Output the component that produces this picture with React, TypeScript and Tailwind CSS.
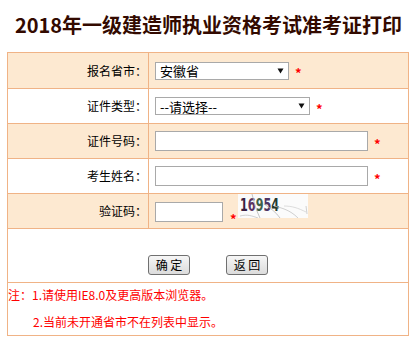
const LINE = "border-[#f0b386]";

function Star({ className = "" }: { className?: string }) {
  return (
    <span className={`text-[#ff0000] text-[13px] font-bold leading-[13px] ${className}`}>
      *
    </span>
  );
}

function FakeSelect({ text, width }: { text: string; width: string }) {
  return (
    <div
      className={`flex items-center justify-between h-[18px] ${width} bg-white border border-[#a9a9a9] pl-[4px] pr-[4px] text-[13px] leading-none text-black`}
    >
      <span>{text}</span>
      <svg width="7" height="6" viewBox="0 0 7 6">
        <path d="M0.5 0.5H6.5L3.5 5.5Z" fill="#111" />
      </svg>
    </div>
  );
}

function TextBox({ width }: { width: string }) {
  return (
    <input
      readOnly
      className={`block h-[20px] ${width} bg-white border border-[#a9a9a9] outline-none`}
    />
  );
}

function FormRow({
  label,
  shaded,
  height,
  align = "items-center",
  children,
}: {
  label: string;
  shaded: boolean;
  height: string;
  align?: string;
  children?: React.ReactNode;
}) {
  return (
    <div
      className={`grid grid-cols-[141px_1fr] ${height} border-b ${LINE} ${shaded ? "bg-[#fde9d1]" : "bg-white"}`}
    >
      <div className={`flex items-center justify-end pr-[1px] border-r ${LINE} text-[12px] text-black`}>
        {label}
      </div>
      <div className={`flex ${align} pl-[6px]`}>{children}</div>
    </div>
  );
}

// captcha picture: squeezed digits with grey noise lines
function Captcha() {
  return (
    <div className="relative w-[70px] h-[24px] bg-[#fbfbfb] overflow-hidden">
      <span className="absolute left-[2px] top-[3px] origin-left scale-x-[0.66] whitespace-nowrap text-[17px] leading-[17px] font-bold font-['DejaVu_Sans',sans-serif]">
        <span className="text-[#3a1f42]">1</span>
        <span className="text-[#5a3462]">6</span>
        <span className="text-[#3f6049]">9</span>
        <span className="text-[#4e3563]">5</span>
        <span className="text-[#23392f]">4</span>
      </span>
      <svg width="70" height="24" viewBox="0 0 70 24" className="absolute inset-0">
        <path d="M14 0 C16 8 18 16 22 24" stroke="#b8b8b8" strokeWidth="0.8" fill="none" />
        <path d="M26 10 C32 14 38 18 42 24" stroke="#b8b8b8" strokeWidth="0.8" fill="none" />
        <path d="M36 12 C44 14 52 16 60 24" stroke="#c4c4c4" strokeWidth="0.8" fill="none" />
        <path d="M2 22 C10 20 14 22 20 24" stroke="#c4c4c4" strokeWidth="0.8" fill="none" />
        <path d="M46 12 C54 12 60 14 68 18" stroke="#cfcfcf" strokeWidth="0.7" fill="none" />
        <path d="M68 12 L69 20" stroke="#bdbdbd" strokeWidth="0.7" fill="none" />
      </svg>
    </div>
  );
}

function Button({ text }: { text: string }) {
  return (
    <button className="flex items-center justify-center w-[42px] h-[20px] rounded-[3px] border border-[#707070] bg-gradient-to-b from-[#f6f6f6] to-[#dcdcdc] text-[12px] leading-none text-black whitespace-pre">
      {text}
    </button>
  );
}

export default function App() {
  return (
    <div className="w-[417px] h-[343px] bg-white font-['Noto_Sans_CJK_SC','Liberation_Sans',sans-serif]">
      <div className="h-[52px] pt-[13px] text-center text-[20px] leading-[24px] font-bold text-[#330a00] whitespace-nowrap">
        2018年一级建造师执业资格考试准考证打印
      </div>
      <div className={`ml-[7px] w-[402px] border ${LINE}`}>
        <FormRow label="报名省市：" shaded height="h-[36px]">
          <FakeSelect text="安徽省" width="w-[134px]" />
          <Star className="ml-[6px] translate-y-[2px]" />
        </FormRow>
        <FormRow label="证件类型：" shaded={false} height="h-[35px]">
          <FakeSelect text="--请选择--" width="w-[155px]" />
          <Star className="ml-[6px] translate-y-[2px]" />
        </FormRow>
        <FormRow label="证件号码：" shaded height="h-[35px]">
          <TextBox width="w-[213px]" />
          <Star className="ml-[6px] translate-y-[2px]" />
        </FormRow>
        <FormRow label="考生姓名：" shaded={false} height="h-[35px]">
          <TextBox width="w-[213px]" />
          <Star className="ml-[6px] translate-y-[2px]" />
        </FormRow>
        <FormRow label="验证码：" shaded height="h-[35px]" align="items-start">
          <div className="mt-[8px]">
            <TextBox width="w-[68px]" />
          </div>
          <Star className="ml-[7px] mt-[18px]" />
          <div className="ml-[1px]">
            <Captcha />
          </div>
        </FormRow>
        <div className={`flex justify-center gap-[36px] h-[54px] pt-[26px] border-b ${LINE}`}>
          <Button text="确 定" />
          <Button text="返 回" />
        </div>
        <div className="h-[52px] text-[12px] text-[#ff0000]">
          <p className="leading-[24px]">注：1.请使用IE8.0及更高版本浏览器。</p>
          <p className="mt-[3px] pl-[25px] leading-[24px]">2.当前未开通省市不在列表中显示。</p>
        </div>
      </div>
    </div>
  );
}
